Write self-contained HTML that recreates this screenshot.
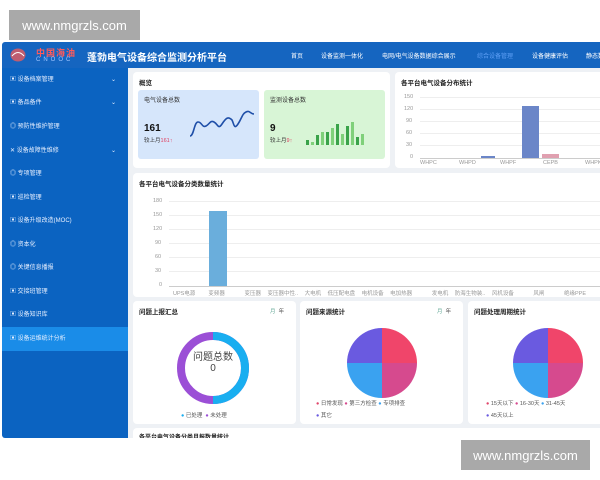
<!DOCTYPE html><html><head><meta charset="utf-8"><style>
*{margin:0;padding:0;box-sizing:border-box}
body{width:600px;height:480px;background:#fff;position:relative;overflow:hidden;font-family:"Liberation Sans","Noto Sans CJK SC",sans-serif;font-size:7px;color:#333}
.abs{position:absolute}
.wm{background:#a9a9a9;color:#fff;font-size:13px;display:flex;align-items:center;justify-content:center}
.app{left:2px;top:42px;width:598px;height:396px;background:#eef1f5;overflow:hidden;border-radius:3px 0 0 3px}
.hdr{left:0;top:0;width:598px;height:26px;background:#1565c0}
.side{left:0;top:26px;width:126px;height:370px;background:#0b63c1}
.si{position:absolute;left:0;width:126px;height:24px;color:#e8f0ff;font-size:6px;padding-left:8px;line-height:24px}
.si .ar{position:absolute;right:12px;font-size:6px}
.pn{position:absolute;background:#fff;border-radius:4px}
.t{position:absolute;font-size:6.5px;font-weight:bold;color:#222}
.nav{position:absolute;top:9px;color:#fff;font-size:6px;white-space:nowrap}
.ax{position:absolute;font-size:5.5px;color:#999}
.gl{position:absolute;height:1px;background:#eee}
</style></head><body>
<div class="abs wm" style="left:9px;top:10px;width:131px;height:30px">www.nmgrzls.com</div>
<div class="abs wm" style="left:461px;top:440px;width:129px;height:30px">www.nmgrzls.com</div>
<div class="abs app">
 <div class="abs hdr">
  <svg class="abs" style="left:8px;top:5px" width="16" height="16"><ellipse cx="8" cy="8" rx="7.5" ry="6.5" fill="#e85b5b" opacity=".8"/><path d="M2 9 Q8 2 14 9" stroke="#fff" fill="none"/></svg>
  <div class="abs" style="left:34px;top:4px;color:#ff5a5a;font-size:9px;font-weight:bold;letter-spacing:1px">中国海油</div>
  <div class="abs" style="left:34px;top:15px;color:#9ec4ff;font-size:6px;letter-spacing:3px">CNOOC</div>
  <div class="abs" style="left:85px;top:7px;color:#fff;font-size:10px;font-weight:bold">蓬勃电气设备综合监测分析平台</div>
  <div class="nav" style="left:289px">首页</div>
  <div class="nav" style="left:319px">设备监测一体化</div>
  <div class="nav" style="left:380px">电网/电气设备数据综合展示</div>
  <div class="nav" style="left:475px;color:#5e9ff5">综合设备管理</div>
  <div class="nav" style="left:530px">设备健康评估</div>
  <div class="nav" style="left:584px">静态数据</div>
 </div>
 <div class="abs side">
  <div class="si" style="top:0">▣ 设备档案管理<span class="ar">⌄</span></div>
  <div class="si" style="top:23px">▣ 备品备件<span class="ar">⌄</span></div>
  <div class="si" style="top:47px">◎ 预防性维护管理</div>
  <div class="si" style="top:71px">✕ 设备故障性维修<span class="ar">⌄</span></div>
  <div class="si" style="top:94px">◎ 专项管理</div>
  <div class="si" style="top:118px">▣ 巡检管理</div>
  <div class="si" style="top:141px">▣ 设备升级改造(MOC)</div>
  <div class="si" style="top:165px">◎ 资本化</div>
  <div class="si" style="top:188px">◎ 关键信息播报</div>
  <div class="si" style="top:212px">▣ 交接班管理</div>
  <div class="si" style="top:235px">▣ 设备知识库</div>
  <div class="si" style="top:259px;background:#1a8ce8;height:24px">▣ 设备运维统计分析</div>
 </div>
 <div class="pn" style="left:131px;top:30px;width:257px;height:96px">
  <div class="t" style="left:6px;top:5px">概览</div>
  <div class="abs" style="left:5px;top:18px;width:121px;height:69px;background:#d6e6fb;border-radius:3px">
   <div class="abs" style="left:6px;top:5px;font-size:6px">电气设备总数</div>
   <div class="abs" style="left:6px;top:33px;font-size:10px;font-weight:bold;color:#111">161</div>
   <div class="abs" style="left:6px;top:46px;font-size:5.5px">较上月<span style="color:#e04060">161↑</span></div>
   <svg class="abs" style="left:50px;top:20px" width="70" height="30"><path d="M2 26 C6 26 6 12 10 12 C14 12 14 18 18 16 C22 14 22 10 26 12 C30 14 30 20 34 14 C38 8 40 6 44 10 C46 14 46 20 50 14 C54 8 54 4 58 2 C62 0 62 4 66 4" stroke="#1f4fa8" stroke-width="1.6" fill="none"/></svg>
  </div>
  <div class="abs" style="left:131px;top:18px;width:121px;height:69px;background:#d8f5d6;border-radius:3px">
   <div class="abs" style="left:6px;top:5px;font-size:6px">监测设备总数</div>
   <div class="abs" style="left:6px;top:33px;font-size:10px;font-weight:bold;color:#111">9</div>
   <div class="abs" style="left:6px;top:46px;font-size:5.5px">较上月<span style="color:#e04060">9↑</span></div>
   <svg class="abs" style="left:40px;top:20px" width="80" height="36"><g fill="#3aa34a"><rect x="2" y="30" width="3" height="5"/><rect x="7" y="32" width="3" height="3" fill="#7fd07a"/><rect x="12" y="25" width="3" height="10"/><rect x="17" y="22" width="3" height="13" fill="#7fd07a"/><rect x="22" y="22" width="3" height="13"/><rect x="27" y="18" width="3" height="17" fill="#7fd07a"/><rect x="32" y="14" width="3" height="21"/><rect x="37" y="24" width="3" height="11" fill="#7fd07a"/><rect x="42" y="16" width="3" height="19"/><rect x="47" y="12" width="3" height="23" fill="#7fd07a"/><rect x="52" y="27" width="3" height="8"/><rect x="57" y="24" width="3" height="11" fill="#7fd07a"/></g></svg>
  </div>
 </div>
 <div class="pn" style="left:393px;top:30px;width:210px;height:96px">
  <div class="t" style="left:6px;top:5px">各平台电气设备分布统计</div>
  <div class="ax" style="left:9px;top:22px">150</div><div class="ax" style="left:9px;top:34px">120</div><div class="ax" style="left:11px;top:46px">90</div><div class="ax" style="left:11px;top:58px">60</div><div class="ax" style="left:11px;top:70px">30</div><div class="ax" style="left:15px;top:82px">0</div>
  <div class="gl" style="left:25px;top:25px;width:190px"></div><div class="gl" style="left:25px;top:37px;width:190px"></div><div class="gl" style="left:25px;top:49px;width:190px"></div><div class="gl" style="left:25px;top:61px;width:190px"></div><div class="gl" style="left:25px;top:73px;width:190px"></div>
  <div class="gl" style="left:25px;top:86px;width:190px;background:#ccc"></div>
  <div class="abs" style="left:86px;top:84px;width:14px;height:2px;background:#6b86c8"></div>
  <div class="abs" style="left:127px;top:34px;width:17px;height:52px;background:#6b86c8"></div>
  <div class="abs" style="left:147px;top:82px;width:17px;height:4px;background:#e0a0b0"></div>
  <div class="ax" style="left:25px;top:88px">WHPC</div><div class="ax" style="left:64px;top:88px">WHPD</div><div class="ax" style="left:105px;top:88px">WHPF</div><div class="ax" style="left:148px;top:88px">CEPB</div><div class="ax" style="left:190px;top:88px">WHPK</div>
 </div>
 <div class="pn" style="left:131px;top:131px;width:472px;height:124px">
  <div class="t" style="left:6px;top:5px">各平台电气设备分类数量统计</div>
  <div class="ax" style="left:20px;top:25px">180</div><div class="ax" style="left:20px;top:39px">150</div><div class="ax" style="left:20px;top:53px">120</div><div class="ax" style="left:22px;top:67px">90</div><div class="ax" style="left:22px;top:81px">60</div><div class="ax" style="left:22px;top:95px">30</div><div class="ax" style="left:26px;top:109px">0</div>
  <div class="gl" style="left:36px;top:28px;width:440px"></div><div class="gl" style="left:36px;top:42px;width:440px"></div><div class="gl" style="left:36px;top:56px;width:440px"></div><div class="gl" style="left:36px;top:70px;width:440px"></div><div class="gl" style="left:36px;top:84px;width:440px"></div><div class="gl" style="left:36px;top:98px;width:440px"></div>
  <div class="gl" style="left:36px;top:113px;width:440px;background:#ccc"></div>
  <div class="abs" style="left:76px;top:38px;width:18px;height:75px;background:#6aaedc"></div>
  <div class="ax" style="left:40px;top:116px;word-spacing:5px;white-space:nowrap">UPS电源 &nbsp;变频器 &nbsp; 变压器 变压器中性.. 大电机 低压配电盘 电机设备 电加热器 &nbsp; 发电机 防海生物装.. 风机设备 &nbsp; 风闸 &nbsp; 绝缘PPE</div>
 </div>
 <div class="pn" style="left:131px;top:259px;width:163px;height:123px">
  <div class="t" style="left:6px;top:5px">问题上报汇总</div>
  <div class="ax" style="left:137px;top:6px;color:#6a9">月 &nbsp;<span style="color:#555">年</span></div>
  <svg class="abs" style="left:40px;top:27px" width="80" height="80"><circle cx="40" cy="40" r="32" fill="none" stroke="#9b4fd6" stroke-width="8"/><path d="M40 8 A32 32 0 0 1 40 72" fill="none" stroke="#19aef0" stroke-width="8"/></svg>
  <div class="abs" style="left:55px;top:51px;font-size:10px;color:#444;text-align:center;width:50px;line-height:11px">问题总数<br>0</div>
  <div class="ax" style="left:48px;top:110px;color:#555"><span style="color:#19aef0">●</span> 已处理 &nbsp;<span style="color:#9b4fd6">●</span> 未处理</div>
 </div>
 <div class="pn" style="left:298px;top:259px;width:163px;height:123px">
  <div class="t" style="left:6px;top:5px">问题来源统计</div>
  <div class="ax" style="left:137px;top:6px;color:#6a9">月 &nbsp;<span style="color:#555">年</span></div>
  <svg class="abs" style="left:47px;top:27px" width="70" height="70"><path d="M35 35 L35 0 A35 35 0 0 1 70 35Z" fill="#f0456a"/><path d="M35 35 L70 35 A35 35 0 0 1 35 70Z" fill="#d64a8e"/><path d="M35 35 L35 70 A35 35 0 0 1 0 35Z" fill="#3aa2f0"/><path d="M35 35 L0 35 A35 35 0 0 1 35 0Z" fill="#6a5ae0"/></svg>
  <div class="ax" style="left:16px;top:97px;color:#555;line-height:12px"><span style="color:#e0456a">●</span> 日常发现 <span style="color:#d64a8e">●</span> 第三方检查 <span style="color:#3aa2f0">●</span> 专项排查<br><span style="color:#6a5ae0">●</span> 其它</div>
 </div>
 <div class="pn" style="left:466px;top:259px;width:140px;height:123px">
  <div class="t" style="left:6px;top:5px">问题处理周期统计</div>
  <svg class="abs" style="left:45px;top:27px" width="70" height="70"><path d="M35 35 L35 0 A35 35 0 0 1 70 35Z" fill="#f0456a"/><path d="M35 35 L70 35 A35 35 0 0 1 35 70Z" fill="#d64a8e"/><path d="M35 35 L35 70 A35 35 0 0 1 0 35Z" fill="#3aa2f0"/><path d="M35 35 L0 35 A35 35 0 0 1 35 0Z" fill="#6a5ae0"/></svg>
  <div class="ax" style="left:18px;top:97px;color:#555;line-height:12px;white-space:nowrap"><span style="color:#e0456a">●</span> 15天以下 <span style="color:#d64a8e">●</span> 16-30天 <span style="color:#3aa2f0">●</span> 31-45天<br><span style="color:#6a5ae0">●</span> 45天以上</div>
 </div>
 <div class="pn" style="left:131px;top:386px;width:472px;height:20px">
  <div class="t" style="left:6px;top:4px;font-size:6px">各平台电气设备分类月报数量统计</div>
 </div>
</div>
</body></html>
